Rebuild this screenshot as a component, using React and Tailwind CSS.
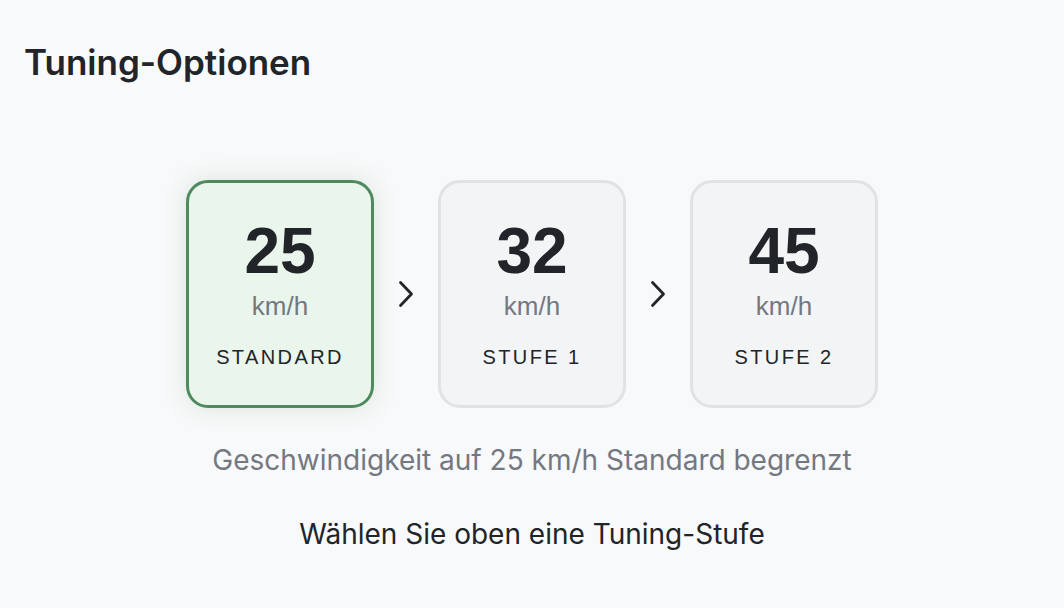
const levels = [
  { speed: 25, label: "STANDARD", active: true },
  { speed: 32, label: "STUFE 1" },
  { speed: 45, label: "STUFE 2" },
];

function Chevron() {
  return (
    <svg width="18" height="28" viewBox="0 0 18 28" fill="none" className="text-[#212428]">
      <path d="M3.5 2.5 14.5 14 3.5 25.5" stroke="currentColor" strokeWidth="2.8" strokeLinecap="round" strokeLinejoin="round" />
    </svg>
  );
}

function LevelCard({ speed, label, active }) {
  return (
    <button
      type="button"
      className={`flex h-[228px] w-[188px] flex-col items-center rounded-[22px] border-[3px] pt-[30px] ${
        active
          ? "border-[#4e8a5e] bg-[#eaf5ec] shadow-[0_0_24px_rgba(78,138,94,0.18)]"
          : "border-[#e1e2e4] bg-[#f3f4f5]"
      }`}
    >
      <span className="font-['Liberation_Sans',Arial,sans-serif] text-[64px] font-bold leading-[76px] text-[#212428]">
        {speed}
      </span>
      <span className="mt-[2px] font-['Liberation_Sans',Arial,sans-serif] text-[26px] leading-[30px] text-[#737881]">
        km/h
      </span>
      <span className="mt-[24px] font-['Liberation_Sans',Arial,sans-serif] text-[20px] leading-[24px] tracking-[0.12em] text-[#212428]">
        {label}
      </span>
    </button>
  );
}

export default function App() {
  return (
    <div className="min-h-[608px] w-full bg-[#f8f9fa] px-6 pt-[39px] font-['Inter',sans-serif]">
      <h1 className="text-[35px] font-semibold leading-[46px] text-[#212428]">Tuning-Optionen</h1>

      <div className="mt-[95px] flex items-center justify-center">
        {levels.map((lvl, i) => (
          <div key={lvl.speed} className="flex items-center">
            {i > 0 && (
              <div className="flex w-[64px] justify-center">
                <Chevron />
              </div>
            )}
            <LevelCard {...lvl} />
          </div>
        ))}
      </div>

      <p className="mt-[32px] text-center text-[28px] leading-[40px] text-[#737881]">
        Geschwindigkeit auf 25 km/h Standard begrenzt
      </p>
      <p className="mt-[34px] text-center text-[28px] leading-[40px] text-[#212428]">
        Wählen Sie oben eine Tuning-Stufe
      </p>
    </div>
  );
}
